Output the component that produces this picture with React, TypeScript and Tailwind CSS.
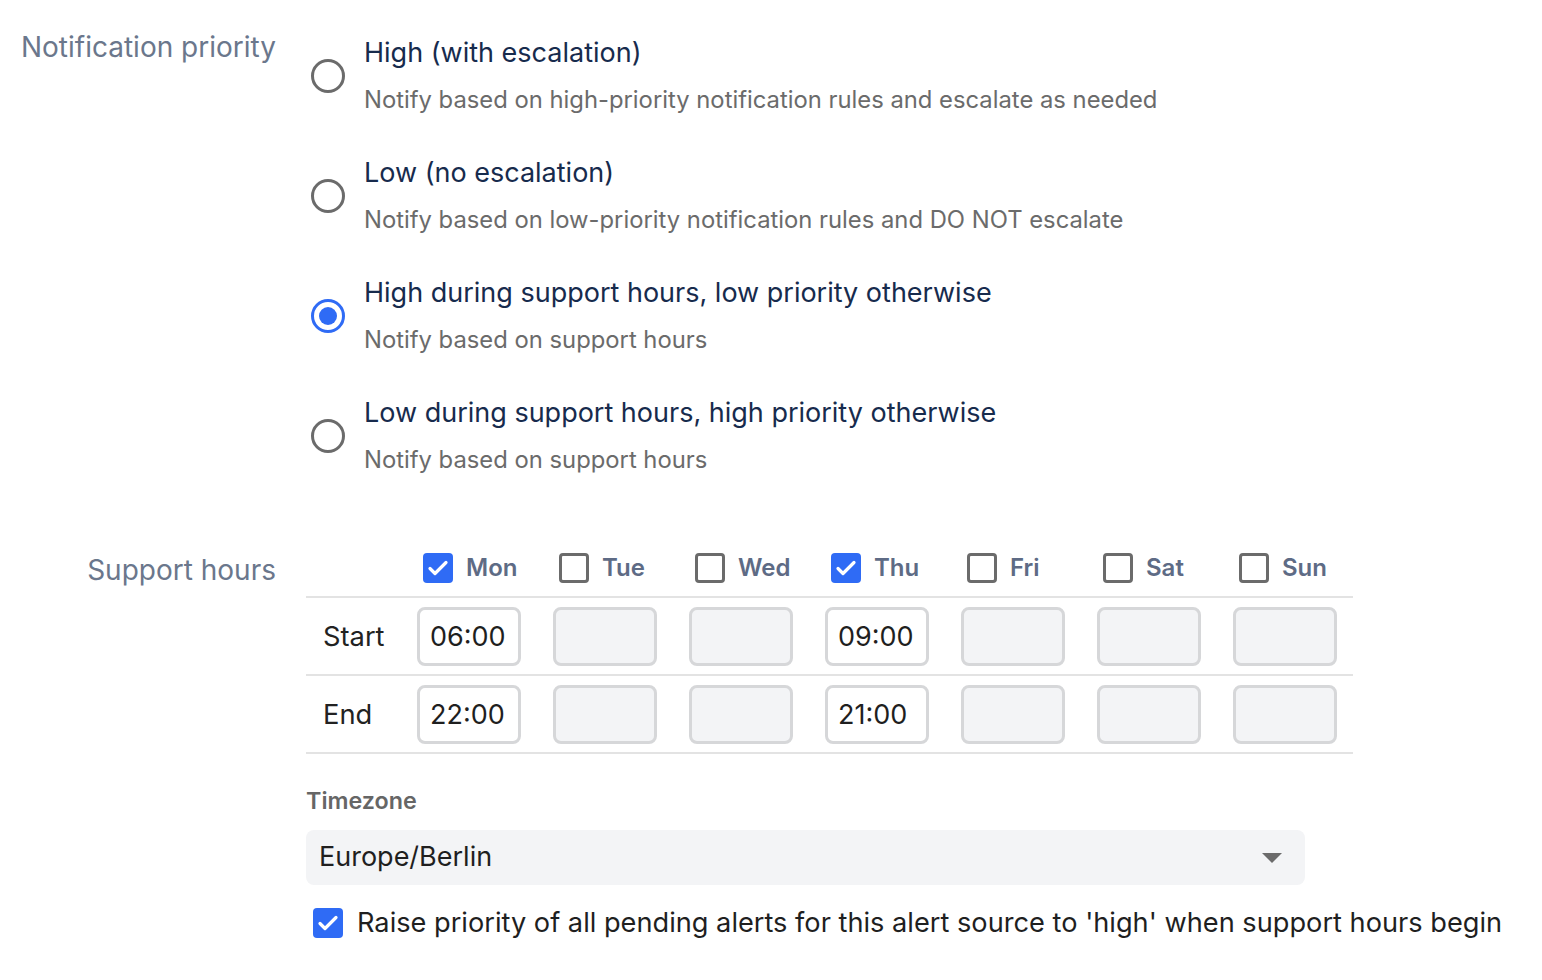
const options = [
  { title: "High (with escalation)", desc: "Notify based on high-priority notification rules and escalate as needed", checked: false },
  { title: "Low (no escalation)", desc: "Notify based on low-priority notification rules and DO NOT escalate", checked: false },
  { title: "High during support hours, low priority otherwise", desc: "Notify based on support hours", checked: true },
  { title: "Low during support hours, high priority otherwise", desc: "Notify based on support hours", checked: false },
];

const days = [
  { name: "Mon", on: true, start: "06:00", end: "22:00" },
  { name: "Tue", on: false, start: "", end: "" },
  { name: "Wed", on: false, start: "", end: "" },
  { name: "Thu", on: true, start: "09:00", end: "21:00" },
  { name: "Fri", on: false, start: "", end: "" },
  { name: "Sat", on: false, start: "", end: "" },
  { name: "Sun", on: false, start: "", end: "" },
];

function Radio({ checked }: { checked: boolean }) {
  if (checked) {
    return (
      <span className="flex h-[34px] w-[34px] shrink-0 items-center justify-center rounded-full border-[3px] border-[#2f6bf5] bg-white">
        <span className="block h-[18px] w-[18px] rounded-full bg-[#2f6bf5]" />
      </span>
    );
  }
  return <span className="block h-[34px] w-[34px] shrink-0 rounded-full border-[3px] border-[#6b6b6b] bg-white" />;
}

function Check({ checked }: { checked: boolean }) {
  if (checked) {
    return (
      <span className="flex h-[30px] w-[30px] shrink-0 items-center justify-center rounded-[4px] bg-[#2f6bf5]">
        <svg width="24" height="24" viewBox="0 0 24 24" fill="none" stroke="white" strokeWidth="3.2" strokeLinecap="round" strokeLinejoin="round">
          <path d="M4 12.5l5 5L20 6.5" />
        </svg>
      </span>
    );
  }
  return <span className="block h-[30px] w-[30px] shrink-0 rounded-[4px] border-[3px] border-[#6b6b6b] bg-white" />;
}

function TimeInput({ value }: { value: string }) {
  return (
    <div
      className={
        "flex h-[59px] w-[104px] items-center rounded-[8px] border-[3px] border-[#d6d7d9] px-[10px] pt-[3px] text-[27px] text-[#1f1f1f] " +
        (value ? "bg-white" : "bg-[#f3f4f6]")
      }
    >
      {value}
    </div>
  );
}

export default function App() {
  return (
    <div className="min-h-screen bg-white font-['Inter',sans-serif]">
      {/* notification priority */}
      <div className="flex pt-[30px]">
        <div className="w-[276px] shrink-0 text-right text-[28px] leading-[34px] text-[#6b778c]">
          Notification priority
        </div>
        <div className="flex flex-col pl-[35px]">
          {options.map((o) => (
            <div key={o.title} className="flex h-[120px] items-start gap-[19px]">
              <div className="pt-[29px]">
                <Radio checked={o.checked} />
              </div>
              <div className="flex flex-col pt-[5px]">
                <div className="text-[27px] leading-[36px] text-[#172b4d]">{o.title}</div>
                <div className="mt-[14px] text-[23.8px] leading-[30px] text-[#6b6b6b]">{o.desc}</div>
              </div>
            </div>
          ))}
        </div>
      </div>

      {/* support hours */}
      <div className="mt-[34px] flex">
        <div className="w-[276px] shrink-0 pt-[9px] text-right text-[28px] leading-[34px] text-[#6b778c]">
          Support hours
        </div>
        <div className="flex flex-col items-start pl-[30px]">
          <table className="w-[1047px] table-fixed border-collapse">
            <thead>
              <tr className="border-b-2 border-[#e3e3e3]">
                <th className="w-[95px] p-0" />
                {days.map((d) => (
                  <th key={d.name} className="h-[53px] w-[136px] p-0 pb-[4px] pl-[22px] text-left align-middle">
                    <div className="flex items-center gap-[13px]">
                      <Check checked={d.on} />
                      <span className="text-[24px] font-semibold text-[#5e6b85]">{d.name}</span>
                    </div>
                  </th>
                ))}
              </tr>
            </thead>
            <tbody>
              <tr className="border-b-2 border-[#e3e3e3]">
                <td className="h-[78px] pl-[17px] pt-[3px] text-[27.3px] text-[#222]">Start</td>
                {days.map((d) => (
                  <td key={d.name} className="px-[16px] align-middle">
                    <TimeInput value={d.start} />
                  </td>
                ))}
              </tr>
              <tr className="border-b-2 border-[#e3e3e3]">
                <td className="h-[78px] pl-[17px] pt-[3px] text-[27.3px] text-[#222]">End</td>
                {days.map((d) => (
                  <td key={d.name} className="px-[16px] align-middle">
                    <TimeInput value={d.end} />
                  </td>
                ))}
              </tr>
            </tbody>
          </table>

          <div className="mt-[32px] text-[23.3px] font-semibold leading-[30px] text-[#666]">Timezone</div>
          <div className="mt-[14px] flex h-[55px] w-[999px] items-center justify-between rounded-[8px] bg-[#f3f4f6] pl-[13px] pr-[23px]">
            <span className="text-[27px] text-[#1f1f1f]">Europe/Berlin</span>
            <svg width="20" height="10" viewBox="0 0 20 10">
              <path d="M0 0h20L10 10z" fill="#6b6b6b" />
            </svg>
          </div>
          <div className="mt-[18px] flex items-center gap-[14px] pl-[7px]">
            <Check checked />
            <span className="text-[27.2px] text-[#1f1f1f]">
              Raise priority of all pending alerts for this alert source to 'high' when support hours begin
            </span>
          </div>
        </div>
      </div>
    </div>
  );
}
